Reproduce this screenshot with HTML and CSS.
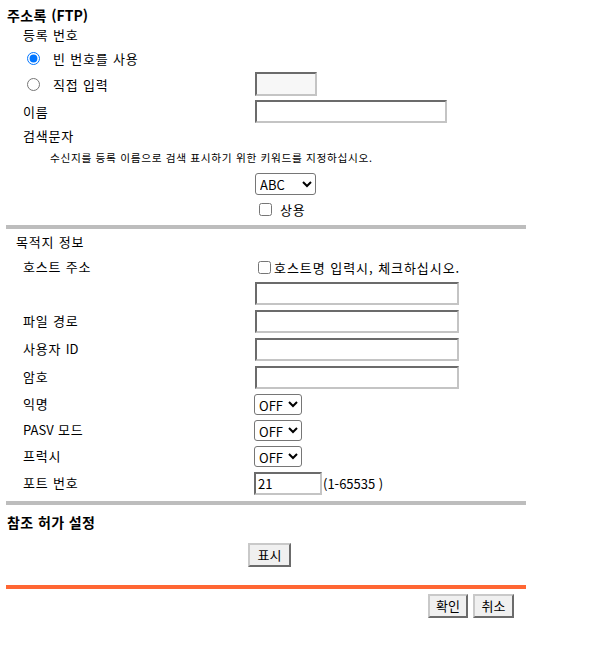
FILE: index.html
```html
<!DOCTYPE html>
<html lang="ko">
<head>
<meta charset="utf-8">
<title>주소록 (FTP)</title>
<link rel="stylesheet" href="styles.css">
</head>
<body>
<div class="page">
  <div class="title">주소록 <span class="lat">(FTP)</span></div>
  <div class="row h20"><span class="lbl">등록 번호</span></div>
  <div class="row h27 single">
    <label class="radio"><input type="radio" name="reg" checked><span>빈 번호를 사용</span></label>
  </div>
  <div class="row h24">
    <label class="radio"><input type="radio" name="reg"><span>직접 입력</span></label>
    <input class="field small disabled" type="text" disabled>
  </div>
  <div class="row h23 mt4">
    <span class="lbl">이름</span>
    <input class="field name" type="text">
  </div>
  <div class="row h25"><span class="lbl">검색문자</span></div>
  <div class="note">수신지를 등록 이름으로 검색 표시하기 위한 키워드를 지정하십시오.</div>
  <div class="row h26">
    <span></span>
    <select class="sel abc"><option>ABC</option></select>
  </div>
  <div class="row h24">
    <span></span>
    <label class="check use"><input type="checkbox"><span>상용</span></label>
  </div>
  <div class="rule gray"></div>

  <div class="subtitle">목적지 정보</div>
  <div class="row h24">
    <span class="lbl">호스트 주소</span>
    <label class="check host"><input type="checkbox"><span>호스트명 입력시, 체크하십시오.</span></label>
  </div>
  <div class="row h28">
    <span></span>
    <input class="field wide" type="text">
  </div>
  <div class="row h28">
    <span class="lbl">파일 경로</span>
    <input class="field wide" type="text">
  </div>
  <div class="row h28">
    <span class="lbl">사용자 <span class="lat">ID</span></span>
    <input class="field wide" type="text">
  </div>
  <div class="row h28">
    <span class="lbl">암호</span>
    <input class="field wide" type="password">
  </div>
  <div class="row h26">
    <span class="lbl">익명</span>
    <select class="sel off"><option>OFF</option><option>ON</option></select>
  </div>
  <div class="row h26">
    <span class="lbl"><span class="lat">PASV</span> 모드</span>
    <select class="sel off"><option>OFF</option><option>ON</option></select>
  </div>
  <div class="row h26">
    <span class="lbl">프럭시</span>
    <select class="sel off"><option>OFF</option><option>ON</option></select>
  </div>
  <div class="row h28">
    <span class="lbl">포트 번호</span>
    <div class="port"><input class="field portin" type="text" value="21"><span class="range">(1-65535 )</span></div>
  </div>
  <div class="rule gray r2"></div>

  <div class="title t2">참조 허가 설정</div>
  <div class="showrow"><button class="btn show" type="button">표시</button></div>
  <div class="rule orange"></div>
  <div class="actions">
    <button class="btn ok" type="button">확인</button>
    <button class="btn cancel" type="button">취소</button>
  </div>
</div>
</body>
</html>
```

FILE: styles.css
```css
html, body {
  margin: 0;
  padding: 0;
  background: #ffffff;
}

body {
  font-family: "Noto Sans CJK KR", "Noto Sans", sans-serif;
  font-size: 13px;
  color: #000000;
  letter-spacing: 0.8px;
}

.lat {
  letter-spacing: 0;
}

.page {
  width: 520px;
  margin-left: 6px;
  padding-top: 5px;
}

.title {
  height: 20px;
  line-height: 20px;
  font-size: 14px;
  font-weight: bold;
  padding-left: 1px;
  letter-spacing: 0.4px;
}

.t2 {
  margin-top: 5px;
  height: 24px;
  line-height: 24px;
}

.subtitle {
  height: 26px;
  line-height: 26px;
  padding-left: 10px;
}

.row {
  display: grid;
  grid-template-columns: 232px auto;
  align-items: center;
  justify-items: start;
  padding-left: 17px;
}

.row.single {
  grid-template-columns: auto;
}

.h20 { height: 20px; }
.h23 { height: 23px; }
.h24 { height: 24px; }
.h25 { height: 25px; }
.h26 { height: 26px; }
.h27 { height: 27px; }
.h28 { height: 28px; }
.mt4 { margin-top: 4px; }

.lbl {
  line-height: 18px;
}

.radio {
  display: flex;
  align-items: center;
  padding-left: 4px;
}

.radio input {
  margin: 0;
  width: 13px;
  height: 13px;
}

.radio span {
  margin-left: 13px;
}

.check {
  display: flex;
  align-items: center;
}

.check input {
  margin: 0;
  width: 13px;
  height: 13px;
}

.check.use {
  padding-left: 4px;
}

.check.use span {
  margin-left: 8px;
}

.check.host {
  padding-left: 3px;
}

.check.host span {
  margin-left: 3px;
  letter-spacing: 0.95px;
}

.note {
  height: 23px;
  line-height: 20px;
  font-size: 10.7px;
  padding-left: 44px;
  letter-spacing: 0.65px;
}

.field {
  box-sizing: border-box;
  margin: 0;
  height: 23px;
  padding: 1px 2px;
  border-style: solid;
  border-width: 2px;
  border-top-color: #6b6b6b;
  border-left-color: #6b6b6b;
  border-right-color: #c4c4c4;
  border-bottom-color: #c4c4c4;
  background: #ffffff;
  font-family: "Noto Sans CJK KR", "Noto Sans", sans-serif;
  font-size: 13px;
  letter-spacing: 0;
  color: #000000;
  outline: none;
}

.field.small {
  width: 62px;
  height: 24px;
}

.field.disabled {
  background: #f7f7f7;
}

.field.name {
  width: 192px;
}

.field.wide {
  width: 204px;
}

.port {
  display: flex;
  align-items: center;
}

.field.portin {
  width: 68px;
  height: 23px;
  margin-left: -1px;
}

.range {
  margin-left: 1px;
  letter-spacing: 0;
}

.sel {
  box-sizing: border-box;
  margin: 0;
  font-family: "Noto Sans CJK KR", "Noto Sans", sans-serif;
  font-size: 13px;
  letter-spacing: 0;
  color: #000000;
  background: #ffffff;
  border: 1px solid #767676;
  border-radius: 3px;
}

.sel.abc {
  width: 61px;
  height: 22px;
}

.sel.off {
  width: 48px;
  height: 21px;
  margin-left: -1px;
}

.rule {
  width: 520px;
  height: 4px;
}

.rule.gray {
  background: #bdbdbd;
  margin-top: 4px;
}

.rule.orange {
  background: #ff6633;
  margin-top: 18px;
}

.showrow {
  display: flex;
  padding-left: 242px;
  margin-top: 9px;
}

.btn {
  box-sizing: border-box;
  height: 24px;
  margin: 0;
  padding: 0;
  font-family: "Noto Sans CJK KR", "Noto Sans", sans-serif;
  font-size: 13px;
  letter-spacing: 0;
  color: #000000;
  background: #f0f0f0;
  border-style: solid;
  border-width: 2px;
  border-top-color: #c9c9c9;
  border-left-color: #c9c9c9;
  border-right-color: #6b6b6b;
  border-bottom-color: #6b6b6b;
  border-radius: 0;
  line-height: 18px;
  text-align: center;
}

.btn.show {
  width: 43px;
}

.btn.ok {
  width: 40px;
}

.btn.cancel {
  width: 41px;
}

.actions {
  display: flex;
  justify-content: flex-end;
  gap: 5px;
  padding-right: 12px;
  margin-top: 5px;
}
```
